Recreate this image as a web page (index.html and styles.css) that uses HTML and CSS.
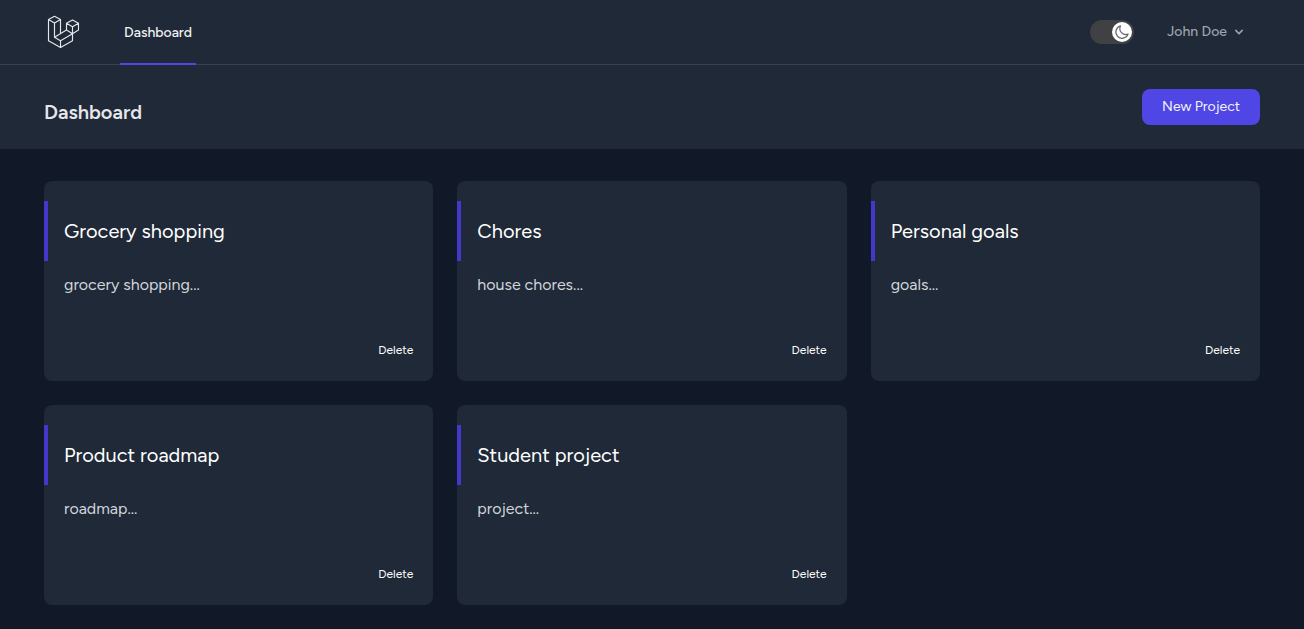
FILE: index.html
```html
<!DOCTYPE html>
<html lang="en">
<head>
<meta charset="utf-8">
<meta name="viewport" content="width=device-width, initial-scale=1">
<title>Dashboard</title>
<link rel="stylesheet" href="styles.css">
</head>
<body>
<nav class="nav">
  <div class="container nav-inner">
    <a class="logo" href="#" aria-label="Home">
      <svg width="33" height="34" viewBox="47 15 33 34" fill="none" stroke="currentColor" stroke-width="1.15" stroke-linejoin="round" stroke-linecap="round">
        <path d="M48.5 19.6 54.5 16.3 60.5 19.6 54.5 23.1ZM48.5 19.6V40.7L60.5 47.4 72.5 40.7V33.7M54.5 23.1V37.2L60.5 40.7V47.4M60.5 19.6V33.7M54.5 37.2 66.5 30.1M60.5 40.7 72.5 33.7M66.5 23.3 72.5 19.9 78.5 23.3 72.5 26.8ZM66.5 23.3V30.1L72.5 33.7 78.5 30.1V23.3M72.5 26.8V33.7"/>
      </svg>
    </a>
    <a class="nav-link" href="#" aria-current="page">Dashboard</a>
    <label class="toggle">
      <input class="toggle-input" type="checkbox" checked aria-label="Dark mode">
      <span class="knob">
        <svg width="16" height="16" viewBox="0 0 16 16" fill="none" stroke="currentColor" stroke-width="1.15" stroke-linejoin="round"><path d="M6.5 1.9A6.3 6.3 0 1 0 14.1 10.1 6 6 0 0 1 6.5 1.9Z"/></svg>
      </span>
    </label>
    <button class="user" type="button">John Doe
      <svg width="16" height="16" viewBox="0 0 20 20" fill="currentColor"><path fill-rule="evenodd" d="M5.293 7.293a1 1 0 0 1 1.414 0L10 10.586l3.293-3.293a1 1 0 1 1 1.414 1.414l-4 4a1 1 0 0 1-1.414 0l-4-4a1 1 0 0 1 0-1.414z"/></svg>
    </button>
  </div>
</nav>
<header class="page-header">
  <div class="container header-inner">
    <h1 class="page-title">Dashboard</h1>
    <button class="primary" type="button">New Project</button>
  </div>
</header>
<main class="container projects">
  <article class="card"><h2 class="card-title">Grocery shopping</h2><p class="card-text">grocery shopping...</p><button class="delete" type="button">Delete</button></article>
  <article class="card"><h2 class="card-title">Chores</h2><p class="card-text">house chores...</p><button class="delete" type="button">Delete</button></article>
  <article class="card"><h2 class="card-title">Personal goals</h2><p class="card-text">goals...</p><button class="delete" type="button">Delete</button></article>
  <article class="card"><h2 class="card-title">Product roadmap</h2><p class="card-text">roadmap...</p><button class="delete" type="button">Delete</button></article>
  <article class="card"><h2 class="card-title">Student project</h2><p class="card-text">project...</p><button class="delete" type="button">Delete</button></article>
</main>
</body>
</html>
```
FILE: styles.css
```css
*, *::before { box-sizing: border-box; }
body {
  margin: 0;
  min-height: 100vh;
  background: #111827;
  color: #fff;
  font: 16px/24px Figtree, "Open Sans", sans-serif;
}
h1, h2, p { margin: 0; }
button { border: 0; padding: 0; background: none; color: inherit; font: inherit; cursor: pointer; }
svg { display: block; }
.container { max-width: 1280px; margin: 0 auto; padding: 0 32px; }
.nav { background: #1f2937; border-bottom: 1px solid #374151; }
.nav-inner { display: flex; align-items: center; height: 64px; }
.logo { margin-left: 3px; color: #e5e7eb; }
.nav-link {
  align-self: stretch;
  display: flex;
  align-items: center;
  margin: 0 auto -1px 40px;
  padding: 2px 4px 0;
  border-bottom: 2px solid #4f46e5;
  color: #f3f4f6;
  font-size: 14px;
  font-weight: 500;
  line-height: 20px;
  text-decoration: none;
}
.toggle {
  display: flex;
  align-items: center;
  justify-content: flex-end;
  width: 44px;
  height: 24px;
  padding: 2px;
  border-radius: 12px;
  background: #404045;
  position: relative;
  cursor: pointer;
}
.toggle-input { position: absolute; inset: 0; margin: 0; opacity: 0; }
.knob {
  display: grid;
  place-items: center;
  width: 20px;
  height: 20px;
  border-radius: 50%;
  background: #fff;
  color: #68686d;
}
.user {
  display: flex;
  align-items: center;
  gap: 4px;
  margin: 0 13px 0 33px;
  color: #9ca3af;
  font-size: 14px;
  font-weight: 500;
  line-height: 20px;
}
.page-header { background: #1f2937; }
.header-inner {
  display: flex;
  align-items: flex-end;
  justify-content: space-between;
  padding-top: 24px;
  padding-bottom: 24px;
}
.page-title { color: #e5e7eb; font-size: 20px; font-weight: 600; line-height: 26px; }
.primary {
  padding: 8px 20px;
  border-radius: 8px;
  background: #4f46e5;
  color: #f3f4f6;
  font-size: 14px;
  line-height: 20px;
}
.projects {
  display: grid;
  grid-template-columns: repeat(3, minmax(0, 1fr));
  gap: 24px;
  padding-top: 32px;
  padding-bottom: 24px;
}
.card {
  display: flex;
  flex-direction: column;
  min-height: 200px;
  padding: 20px 20px 20px 0;
  border-radius: 8px;
  background: #1f2937;
}
.card-title {
  padding: 16px;
  border-left: 4px solid #4338ca;
  font-size: 20px;
  font-weight: 400;
  line-height: 28px;
}
.card-text { padding: 12px 0 0 20px; color: #d1d5db; }
.delete { align-self: flex-end; margin-top: auto; font-size: 12px; line-height: 22px; }
```
